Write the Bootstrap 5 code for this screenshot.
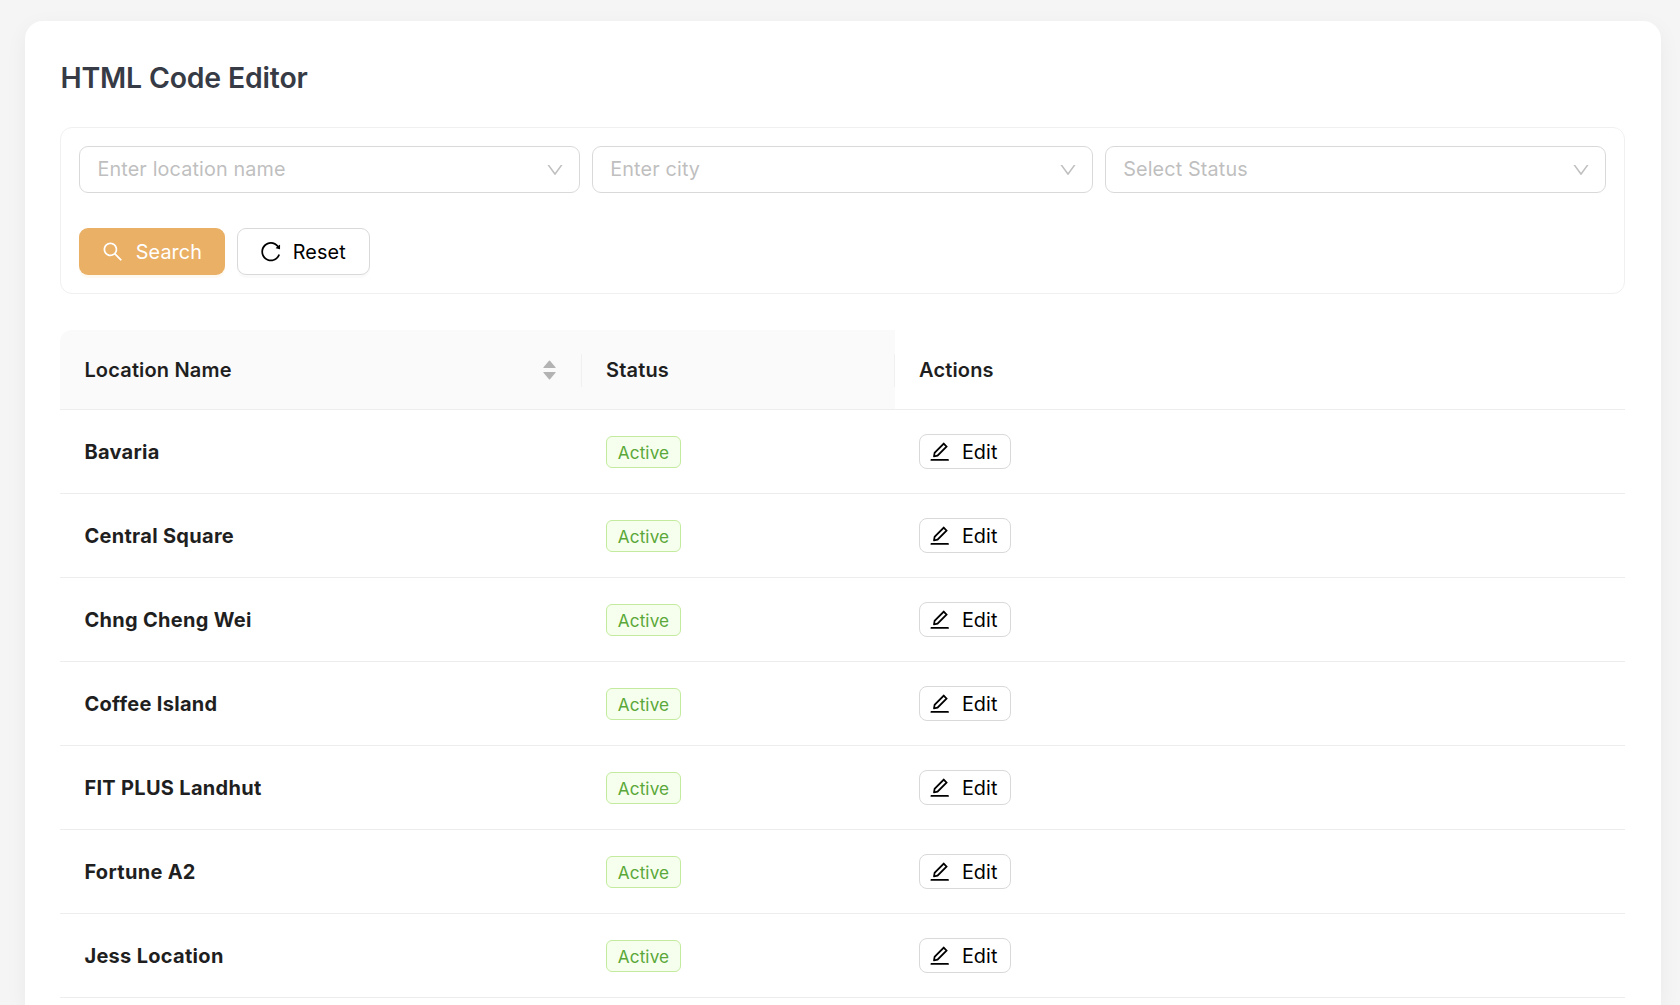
<!DOCTYPE html>
<html lang="en">

<head>
    <meta charset="UTF-8">
    <meta name="viewport" content="width=device-width, initial-scale=1.0">
    <title>HTML Code Editor</title>
    <!-- Bootstrap CSS -->
    <link href="https://cdn.jsdelivr.net/npm/bootstrap@5.3.0/dist/css/bootstrap.min.css" rel="stylesheet">
    <style>
        body {
            height: 1005px;
            overflow: hidden;
            background: #f5f5f5;
            font-family: Inter, "Liberation Sans", sans-serif;
            font-size: 20px;
            color: #1f1f1f;
        }

        .page-panel {
            margin: 20.5px 19px 0 25px;
            padding: 39px 36px 0 35.4px;
            height: 984.5px;
            overflow: hidden;
            border-radius: 18px 18px 0 0;
            box-shadow: 0 6px 22px rgba(0, 0, 0, .05);
        }

        .page-title {
            font-size: 28.4px;
            line-height: 36px;
            font-weight: 600;
            letter-spacing: -.16px;
            color: #363b45;
        }

        .filter-box {
            margin-top: 31.5px;
            height: 167px;
            padding: 17.5px 18px;
            border: 1.5px solid #f0f0f0;
            border-radius: 12px;
        }

        .filter-row {
            gap: 12px;
        }

        .filter-select {
            height: 47px;
            padding: 2px 14px 0 17px;
            border: 1.5px solid #d9d9d9;
            border-radius: 9px;
            color: #bfbfbf;
            font-size: 19.8px;
            letter-spacing: .14px;
        }

        .filter-actions {
            margin-top: 35.5px;
            gap: 12px;
        }

        .btn-tool {
            height: 47px;
            padding: 1px 22px 0;
            border-radius: 9px;
            font-size: 19.8px;
            letter-spacing: .1px;
            gap: 11px;
        }

        .btn-tool span,
        .btn-edit span {
            padding-top: 1px;
        }

        .btn-search {
            width: 146px;
            border: 0;
            background: #eab066;
            color: #fff;
            box-shadow: 0 3px 0 rgba(255, 240, 215, .35);
        }

        .btn-plain {
            border: 1.5px solid #d9d9d9;
            background: #fff;
            color: #000;
            box-shadow: 0 3px 0 rgba(0, 0, 0, .02);
        }

        .btn-reset {
            width: 133px;
            padding: 1px 21px 0;
            gap: 10px;
        }

        .btn-edit {
            width: 92px;
            height: 35px;
            padding: 1px 0 0 8.5px;
            border-radius: 8px;
            font-size: 19.8px;
            letter-spacing: .1px;
            gap: 10px;
            box-shadow: none;
        }

        .ico {
            width: 23.4px;
            height: 23.4px;
            flex: none;
            fill: currentColor;
        }

        .ico-down {
            width: 20px;
            height: 20px;
            margin-top: -1px;
        }

        .ico-sort {
            width: 13px;
            height: 20px;
            margin-right: 25px;
            fill: #b3b3b3;
        }

        .loc-table {
            margin: 35.5px 0 0;
            table-layout: fixed;
            border-collapse: separate;
            border-spacing: 0;
            width: 1565px;
        }

        .loc-table > thead > tr > th,
        .loc-table > tbody > tr > td {
            padding: 1px 24px 0;
            border-bottom: 1.5px solid #ededed;
            vertical-align: middle;
            font-weight: 600;
            color: #1f1f1f;
        }

        .loc-table > thead > tr > th {
            height: 80px;
            padding-top: 2px;
            padding-right: 0;
            background: #fafafa;
            letter-spacing: .17px;
        }

        .loc-table > tbody > tr > td.loc-name {
            padding-top: 2px;
            font-weight: 700;
            letter-spacing: .3px;
        }

        .loc-table > thead > tr > th:first-child {
            border-top-left-radius: 12px;
        }

        .loc-table > thead > tr > th:last-child {
            background: #fff;
        }

        .loc-table > tbody > tr > td {
            height: 84px;
        }

        .col-split {
            height: 33px;
            border-right: 1.5px solid #f0f0f0;
        }

        .tag-active {
            width: 75px;
            height: 32px;
            margin-top: 1px;
            padding-top: 1px;
            border: 1.5px solid #c3eb9e;
            border-radius: 6px;
            background: #f6ffed;
            color: #5ba83a;
            font-size: 17.2px;
            font-weight: 400;
            letter-spacing: .1px;
        }
    </style>
</head>

<body>
    <!-- Shared icons -->
    <svg class="d-none">
        <symbol id="i-search" viewBox="0 0 1024 1024"><path d="M909.6 854.5L649.9 594.8C690.2 542.7 712 479 712 412c0-80.2-31.3-155.4-87.9-212.1-56.6-56.7-132-87.9-212.1-87.9s-155.5 31.3-212.1 87.9C143.2 256.5 112 331.8 112 412c0 80.1 31.3 155.5 87.9 212.1C256.5 680.8 331.8 712 412 712c67 0 130.6-21.8 182.7-62l259.7 259.6a8.2 8.2 0 0011.6 0l43.6-43.5a8.2 8.2 0 000-11.6zM570.4 570.4C528 612.7 471.8 636 412 636s-116-23.3-158.4-65.6C211.3 528 188 471.8 188 412s23.3-116.1 65.6-158.4C296 211.3 352.2 188 412 188s116.1 23.2 158.4 65.6S636 352.2 636 412s-23.3 116.1-65.6 158.4z" /></symbol>
        <symbol id="i-reload" viewBox="0 0 1024 1024"><path d="M909.1 209.3l-56.4 44.1C775.8 155.1 656.2 92 521.9 92 290 92 102.3 279.5 102 511.5 101.7 743.7 289.8 932 521.9 932c181.3 0 335.8-115 394.6-276.1 1.5-4.2-.7-8.9-4.9-10.3l-56.7-19.5a8 8 0 00-10.1 4.8c-1.8 5-3.8 10-5.9 14.9-17.3 41-42.1 77.8-73.7 109.4A344.77 344.77 0 01655.9 829c-42.3 17.9-87.4 27-133.8 27-46.5 0-91.5-9.1-133.8-27A341.5 341.5 0 01279 755.2a342.16 342.16 0 01-73.7-109.4c-17.9-42.4-27-87.4-27-133.9s9.1-91.5 27-133.9c17.3-41 42.1-77.8 73.7-109.4 31.6-31.6 68.4-56.4 109.3-73.8 42.3-17.9 87.4-27 133.8-27 46.5 0 91.5 9.1 133.8 27a341.5 341.5 0 01109.3 73.8c9.9 9.9 19.2 20.4 27.8 31.4l-60.2 47a8 8 0 003 14.1l175.6 43c5 1.2 9.9-2.6 9.9-7.7l.8-180.9c-.1-6.6-7.8-10.3-13-6.2z" /></symbol>
        <symbol id="i-down" viewBox="0 0 1024 1024"><path d="M884 256h-75c-5.1 0-9.9 2.5-12.9 6.6L512 654.2 227.9 262.6c-3-4.1-7.8-6.6-12.9-6.6h-75c-6.5 0-10.3 7.4-6.5 12.7l352.6 486.1c12.8 17.6 39 17.6 51.7 0l352.6-486.1c3.9-5.3.1-12.7-6.4-12.7z" /></symbol>
        <symbol id="i-edit" viewBox="0 0 1024 1024"><path d="M257.7 752c2 0 4-.2 6-.5L431.9 722c2-.4 3.9-1.3 5.3-2.8l423.9-423.9a9.96 9.96 0 000-14.1L694.9 114.9c-1.9-1.9-4.4-2.9-7.1-2.9s-5.2 1-7.1 2.9L256.8 538.8c-1.5 1.5-2.4 3.3-2.8 5.3l-29.5 168.2a33.5 33.5 0 009.4 29.8c6.6 6.4 14.9 9.9 23.8 9.9zm67.4-174.4L687.8 215l73.3 73.3-362.7 362.6-88.9 15.7 15.6-89zM880 836H144c-17.7 0-32 14.3-32 32v36c0 4.4 3.6 8 8 8h784c4.4 0 8-3.6 8-8v-36c0-17.7-14.3-32-32-32z" /></symbol>
    </svg>

    <div class="page-panel bg-white">
        <h1 class="page-title mb-0">HTML Code Editor</h1>

        <!-- Filters -->
        <div class="filter-box">
            <div class="filter-row d-flex">
                <div class="filter-select d-flex align-items-center justify-content-between flex-fill w-100">
                    <span>Enter location name</span>
                    <svg class="ico ico-down"><use href="#i-down" /></svg>
                </div>
                <div class="filter-select d-flex align-items-center justify-content-between flex-fill w-100">
                    <span>Enter city</span>
                    <svg class="ico ico-down"><use href="#i-down" /></svg>
                </div>
                <div class="filter-select d-flex align-items-center justify-content-between flex-fill w-100">
                    <span>Select Status</span>
                    <svg class="ico ico-down"><use href="#i-down" /></svg>
                </div>
            </div>
            <div class="filter-actions d-flex">
                <button type="button" class="btn btn-tool btn-search d-flex align-items-center">
                    <svg class="ico"><use href="#i-search" /></svg><span>Search</span>
                </button>
                <button type="button" class="btn btn-tool btn-plain btn-reset d-flex align-items-center">
                    <svg class="ico"><use href="#i-reload" /></svg><span>Reset</span>
                </button>
            </div>
        </div>

        <!-- Locations -->
        <table class="table loc-table align-middle">
            <colgroup>
                <col style="width: 521.6px">
                <col style="width: 313px">
                <col>
            </colgroup>
            <thead>
                <tr>
                    <th>
                        <div class="col-split d-flex align-items-center justify-content-between">
                            <span>Location Name</span>
                            <svg class="ico-sort" viewBox="0 0 13 20"><path d="M.8 8h11.4c.4 0 .6-.4.3-.7L7 .8a.7.7 0 0 0-1 0L.5 7.3c-.3.3-.1.7.3.7zM.8 12h11.4c.4 0 .6.4.3.7L7 19.2a.7.7 0 0 1-1 0L.5 12.7c-.3-.3-.1-.7.3-.7z" /></svg>
                        </div>
                    </th>
                    <th>
                        <div class="col-split d-flex align-items-center">Status</div>
                    </th>
                    <th>Actions</th>
                </tr>
            </thead>
            <tbody id="locationRows"></tbody>
        </table>
    </div>

    <!-- Bootstrap JS -->
    <script src="https://cdn.jsdelivr.net/npm/bootstrap@5.3.0/dist/js/bootstrap.bundle.min.js"></script>
    <script>
        const locations = ['Bavaria', 'Central Square', 'Chng Cheng Wei', 'Coffee Island', 'FIT PLUS Landhut', 'Fortune A2', 'Jess Location'];
        const tableBody = document.getElementById('locationRows');

        locations.forEach(name => {
            const row = document.createElement('tr');
            row.innerHTML = `
                <td class="loc-name">${name}</td>
                <td><div class="tag-active d-flex align-items-center justify-content-center">Active</div></td>
                <td>
                    <button type="button" class="btn btn-plain btn-edit d-flex align-items-center">
                        <svg class="ico"><use href="#i-edit" /></svg><span>Edit</span>
                    </button>
                </td>
            `;
            tableBody.appendChild(row);
        });
    </script>
</body>

</html>
